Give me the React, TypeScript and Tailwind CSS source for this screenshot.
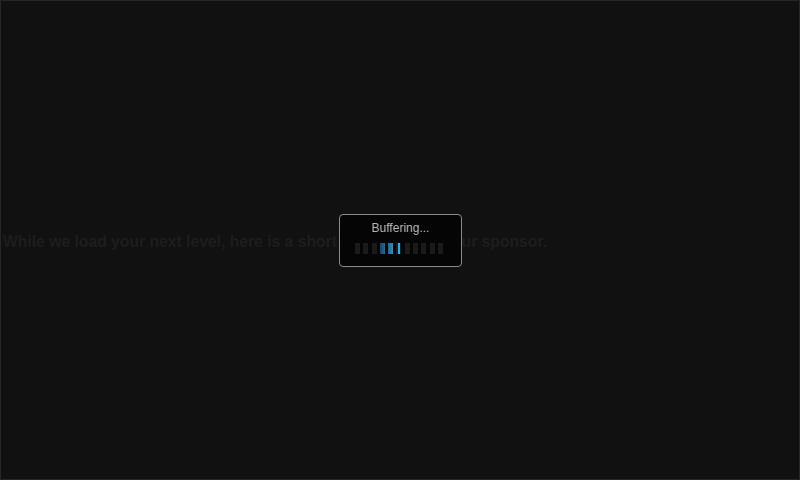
export default function App() {
  const bars = [0, 1, 2, 3, 4, 5, 6, 7, 8, 9, 10];
  return (
    <div className="relative w-[800px] h-[480px] bg-[#111111] border border-[#262626] flex items-center overflow-hidden">
      <p
        className="pl-[2px] pt-[3px] text-[15.7px] font-bold text-[#1d1d1d] whitespace-nowrap"
        style={{ fontFamily: '"Liberation Sans", Arial, sans-serif' }}
      >
        While we load your next level, here is a short message from our sponsor.
      </p>
      <div className="absolute left-[338px] top-[213px] w-[123px] h-[53px] rounded-[4px] border border-[#8a8a8a] bg-[#050505] flex flex-col items-center">
        <div
          className="mt-[5px] text-[12px] leading-[16px] text-[#b4b4b4]"
          style={{ fontFamily: '"Liberation Sans", Arial, sans-serif' }}
        >
          Buffering...
        </div>
        <div className="mt-[7px] mr-[3px] w-[88px] h-[11px] flex justify-between">
          {bars.map((i) => {
            let cls = "w-[5px] h-[11px] bg-[#1a1a1a]";
            if (i === 3) cls = "w-[5px] h-[11px] bg-gradient-to-r from-[#124466] to-[#1e6e9e]";
            if (i === 4) cls = "w-[5px] h-[11px] bg-gradient-to-r from-[#1d6a9a] to-[#2a8ecb]";
            if (i === 5) cls = "w-[5px] h-[11px] bg-[#0c2030] flex justify-center";
            return (
              <div key={i} className={cls}>
                {i === 5 && <div className="w-[2px] h-full bg-[#3aa8e8]" />}
              </div>
            );
          })}
        </div>
      </div>
    </div>
  );
}
